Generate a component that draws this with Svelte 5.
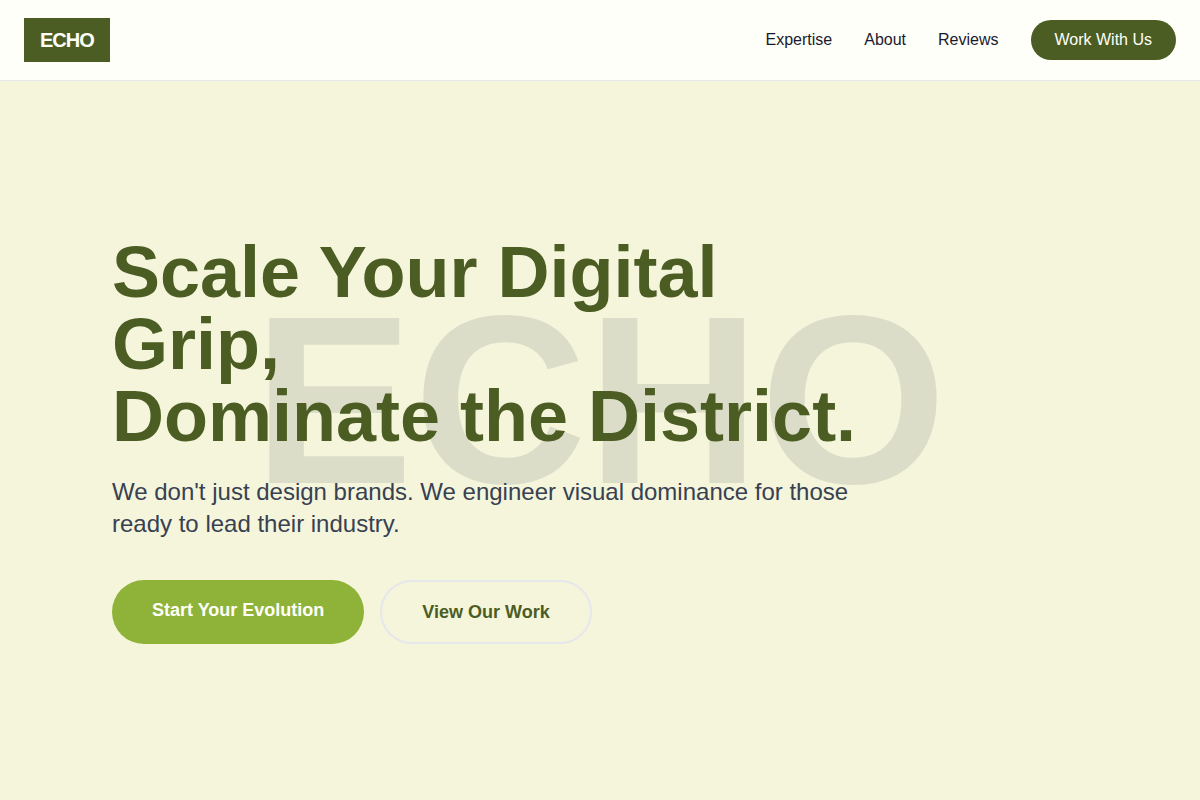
<script>
  const brand = 'ECHO';

  const navLinks = [
    { label: 'Expertise', href: '#expertise' },
    { label: 'About', href: '#about' },
    { label: 'Reviews', href: '#reviews' }
  ];
</script>

<header class="site-header">
  <a class="logo" href="#top">{brand}</a>
  <nav class="nav">
    {#each navLinks as link}
      <a class="nav-link" href={link.href}>{link.label}</a>
    {/each}
    <a class="nav-cta" href="#contact">Work With Us</a>
  </nav>
</header>

<main class="hero" id="top">
  <div class="watermark" aria-hidden="true">{brand}</div>
  <div class="container">
    <div class="intro">
      <h1>Scale Your Digital Grip,<br />Dominate the District.</h1>
      <p>
        We don't just design brands. We engineer visual dominance for those ready to lead their
        industry.
      </p>
    </div>
    <div class="actions">
      <a class="btn primary" href="#contact">Start Your Evolution</a>
      <a class="btn outline" href="#work">View Our Work</a>
    </div>
  </div>
</main>

<style>
  :global(body) {
    margin: 0;
    background: #f5f5dc;
    color: #1a1a2e;
    font-family: 'Liberation Sans', Arial, sans-serif;
    font-size: 16px;
    line-height: 24px;
  }

  a {
    color: inherit;
    text-decoration: none;
  }

  .site-header {
    position: fixed;
    top: 0;
    left: 0;
    right: 0;
    z-index: 10;
    display: flex;
    align-items: center;
    justify-content: space-between;
    padding: 18px 24px;
    background: #fffffa;
    border-bottom: 1px solid #e5e7eb;
  }

  .logo {
    padding: 8px 16px;
    background: #4b5d23;
    color: #fffffa;
    font-size: 20px;
    font-weight: 700;
    line-height: 28px;
    letter-spacing: -1px;
  }

  .nav {
    display: flex;
    align-items: center;
    gap: 32px;
  }

  .nav-cta {
    padding: 8px 24px;
    border-radius: 20px;
    background: #4b5d23;
    color: #fffffa;
  }

  .hero {
    position: relative;
    box-sizing: border-box;
    display: flex;
    align-items: center;
    min-height: 100vh;
    padding-top: 80px;
    overflow: hidden;
  }

  /* oversized brand name behind the headline */
  .watermark {
    position: absolute;
    inset: 0;
    display: flex;
    align-items: center;
    justify-content: center;
    color: #111827;
    font-size: 20vw;
    font-weight: 700;
    line-height: normal;
    opacity: 0.1;
    pointer-events: none;
    user-select: none;
  }

  .container {
    position: relative;
    box-sizing: border-box;
    width: 100%;
    max-width: 1024px;
    margin: 0 auto;
    padding: 0 24px;
  }

  .intro {
    max-width: 768px;
  }

  h1 {
    margin: 0 0 24px;
    color: #4b5d23;
    font-size: 72px;
    font-weight: 700;
    line-height: 72px;
  }

  p {
    margin: 0 0 40px;
    color: #374151;
    font-size: 24px;
    line-height: 32px;
  }

  .actions {
    display: flex;
    flex-wrap: wrap;
    gap: 16px;
  }

  .btn {
    padding: 16px 40px;
    border-radius: 32px;
    font-size: 18px;
    font-weight: 700;
    line-height: 28px;
  }

  .primary {
    background: #8fb339;
    color: #fffffa;
  }

  .outline {
    border: 2px solid #e5e7eb;
    color: #4b5d23;
  }
</style>
